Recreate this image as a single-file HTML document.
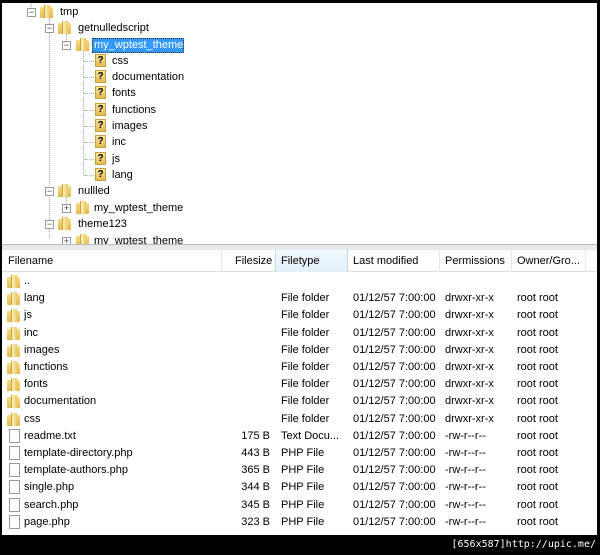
<!DOCTYPE html><html><head><style>
*{margin:0;padding:0;box-sizing:border-box}
body{width:600px;height:555px;background:#000;position:relative;overflow:hidden;font-family:"Liberation Sans",sans-serif;font-size:11px;color:#000}
.t{position:absolute;white-space:nowrap;line-height:13px}
#tree{position:absolute;left:2px;top:3px;width:595px;height:241px;background:#fff;overflow:hidden}
#ti{position:absolute;left:0;top:1px;width:595px;height:241px}
#gap{position:absolute;left:2px;top:244px;width:595px;height:6px;background:#e8e8e8;border-top:1px solid #bbb}
#list{position:absolute;left:2px;top:250px;width:595px;height:285px;background:#fff;overflow:hidden}
.fold{position:absolute;width:13px;height:13px}
.fold:before{content:"";position:absolute;left:0;top:2px;width:13px;height:11px;background:linear-gradient(#f6dc86,#e4b94a);border-radius:1px}
.fold:after{content:"";position:absolute;left:4px;top:0;width:5px;height:13px;background:linear-gradient(90deg,#fff3c4,#e9c660);border-left:1px solid #c9a03a}
.q{position:absolute;width:11px;height:13px;background:linear-gradient(#fbe79a,#e3bd50);border:1px solid #c8a040;font:bold 10px "Liberation Sans",sans-serif;text-align:center;line-height:11px}
.ex{position:absolute;width:9px;height:9px;border:1px solid #999;background:#fff;font-size:9px;line-height:7px;text-align:center;color:#345}
.dl{position:absolute;border-color:#aaa;border-style:dotted;border-width:0}
.doc{position:absolute;width:11px;height:14px;border:1px solid #999;background:#fff}
.hdr{position:absolute;top:0;left:0;width:595px;height:22px;background:#fff;border-bottom:1px solid #ddd}
.sep{position:absolute;top:0;width:1px;height:22px;background:#e3e8ee}
</style></head><body>
<div id="tree"><div id="ti">
<div class="dl" style="left:29px;top:0;height:5px;border-left-width:1px"></div>
<div class="dl" style="left:47px;top:14px;height:220px;border-left-width:1px"></div>
<div class="dl" style="left:64px;top:30px;height:8px;border-left-width:1px"></div>
<div class="dl" style="left:81px;top:47px;height:124px;border-left-width:1px"></div>
<div class="dl" style="left:64px;top:193px;height:10px;border-left-width:1px"></div>
<div class="ex" style="left:25px;top:4px">−</div><div class="fold" style="left:38px;top:1px"></div><div class="t" style="left:58px;top:2px">tmp</div>
<div class="ex" style="left:43px;top:20px">−</div><div class="fold" style="left:56px;top:17px"></div><div class="t" style="left:76px;top:18px">getnulledscript</div>
<div class="ex" style="left:60px;top:37px">−</div><div class="fold" style="left:74px;top:34px"></div><div style="position:absolute;left:90px;top:34px;width:92px;height:15px;background:#3399ff;border:1px dotted #333"></div><div class="t" style="left:92px;top:35px;color:#fff">my_wptest_theme</div>
<div class="dl" style="left:82px;top:57px;width:10px;border-top-width:1px"></div><div class="q" style="left:93px;top:50px">?</div><div class="t" style="left:110px;top:51px">css</div>
<div class="dl" style="left:82px;top:73px;width:10px;border-top-width:1px"></div><div class="q" style="left:93px;top:66px">?</div><div class="t" style="left:110px;top:67px">documentation</div>
<div class="dl" style="left:82px;top:89px;width:10px;border-top-width:1px"></div><div class="q" style="left:93px;top:82px">?</div><div class="t" style="left:110px;top:83px">fonts</div>
<div class="dl" style="left:82px;top:106px;width:10px;border-top-width:1px"></div><div class="q" style="left:93px;top:99px">?</div><div class="t" style="left:110px;top:100px">functions</div>
<div class="dl" style="left:82px;top:122px;width:10px;border-top-width:1px"></div><div class="q" style="left:93px;top:115px">?</div><div class="t" style="left:110px;top:116px">images</div>
<div class="dl" style="left:82px;top:138px;width:10px;border-top-width:1px"></div><div class="q" style="left:93px;top:131px">?</div><div class="t" style="left:110px;top:132px">inc</div>
<div class="dl" style="left:82px;top:155px;width:10px;border-top-width:1px"></div><div class="q" style="left:93px;top:148px">?</div><div class="t" style="left:110px;top:149px">js</div>
<div class="dl" style="left:82px;top:171px;width:10px;border-top-width:1px"></div><div class="q" style="left:93px;top:164px">?</div><div class="t" style="left:110px;top:165px">lang</div>
<div class="ex" style="left:43px;top:183px">−</div><div class="fold" style="left:56px;top:180px"></div><div class="t" style="left:76px;top:181px">nullled</div>
<div class="ex" style="left:60px;top:200px">+</div><div class="fold" style="left:74px;top:197px"></div><div class="t" style="left:92px;top:198px">my_wptest_theme</div>
<div class="ex" style="left:43px;top:216px">−</div><div class="fold" style="left:56px;top:213px"></div><div class="t" style="left:76px;top:214px">theme123</div>
<div class="ex" style="left:60px;top:233px">+</div><div class="fold" style="left:74px;top:230px"></div><div class="t" style="left:92px;top:231px">my_wptest_theme</div>
</div></div>
<div id="gap"></div>
<div id="list">
<div class="hdr">
<div class="t" style="left:6px;top:5px">Filename</div>
<div class="sep" style="left:219px"></div>
<div class="t" style="left:233px;top:5px">Filesize</div>
<div class="sep" style="left:273px;background:#bde"></div>
<div style="position:absolute;left:274px;top:0;width:71px;height:22px;background:linear-gradient(#f2f8fd,#e3f0fa)"></div>
<div class="t" style="left:279px;top:5px">Filetype</div>
<div class="sep" style="left:345px;background:#bde"></div>
<div class="t" style="left:351px;top:5px">Last modified</div>
<div class="sep" style="left:437px"></div>
<div class="t" style="left:443px;top:5px">Permissions</div>
<div class="sep" style="left:509px"></div>
<div class="t" style="left:515px;top:5px">Owner/Gro...</div>
<div class="sep" style="left:583px"></div>
</div>
</div>
<div id="rows" style="position:absolute;left:2px;top:250px"></div>
<script>
var R=[["..",1,"","","","",""],
["lang",1,"","File folder","01/12/57 7:00:00","drwxr-xr-x","root root"],
["js",1,"","File folder","01/12/57 7:00:00","drwxr-xr-x","root root"],
["inc",1,"","File folder","01/12/57 7:00:00","drwxr-xr-x","root root"],
["images",1,"","File folder","01/12/57 7:00:00","drwxr-xr-x","root root"],
["functions",1,"","File folder","01/12/57 7:00:00","drwxr-xr-x","root root"],
["fonts",1,"","File folder","01/12/57 7:00:00","drwxr-xr-x","root root"],
["documentation",1,"","File folder","01/12/57 7:00:00","drwxr-xr-x","root root"],
["css",1,"","File folder","01/12/57 7:00:00","drwxr-xr-x","root root"],
["readme.txt",0,"175 B","Text Docu...","01/12/57 7:00:00","-rw-r--r--","root root"],
["template-directory.php",0,"443 B","PHP File","01/12/57 7:00:00","-rw-r--r--","root root"],
["template-authors.php",0,"365 B","PHP File","01/12/57 7:00:00","-rw-r--r--","root root"],
["single.php",0,"344 B","PHP File","01/12/57 7:00:00","-rw-r--r--","root root"],
["search.php",0,"345 B","PHP File","01/12/57 7:00:00","-rw-r--r--","root root"],
["page.php",0,"323 B","PHP File","01/12/57 7:00:00","-rw-r--r--","root root"]];
var h="";
R.forEach(function(r,i){var y=24+i*17.2;
h+=r[1]?'<div class="fold" style="left:5px;top:'+(y+1)+'px"></div>':'<div class="doc" style="left:7px;top:'+y+'px"></div>';
h+='<div class="t" style="left:22px;top:'+(y+1)+'px">'+r[0]+'</div>';
h+='<div class="t" style="left:200px;width:68px;text-align:right;top:'+(y+1)+'px">'+r[2]+'</div>';
h+='<div class="t" style="left:279px;top:'+(y+1)+'px">'+r[3]+'</div>';
h+='<div class="t" style="left:351px;top:'+(y+1)+'px">'+r[4]+'</div>';
h+='<div class="t" style="left:443px;top:'+(y+1)+'px">'+r[5]+'</div>';
h+='<div class="t" style="left:515px;top:'+(y+1)+'px">'+r[6]+'</div>';});
document.getElementById("rows").innerHTML=h;
</script>
<div class="t" style="right:4px;top:538px;color:#fff;font-size:10px;font-family:'DejaVu Sans Mono',monospace">[656x587]http://upic.me/</div>
</body></html>
